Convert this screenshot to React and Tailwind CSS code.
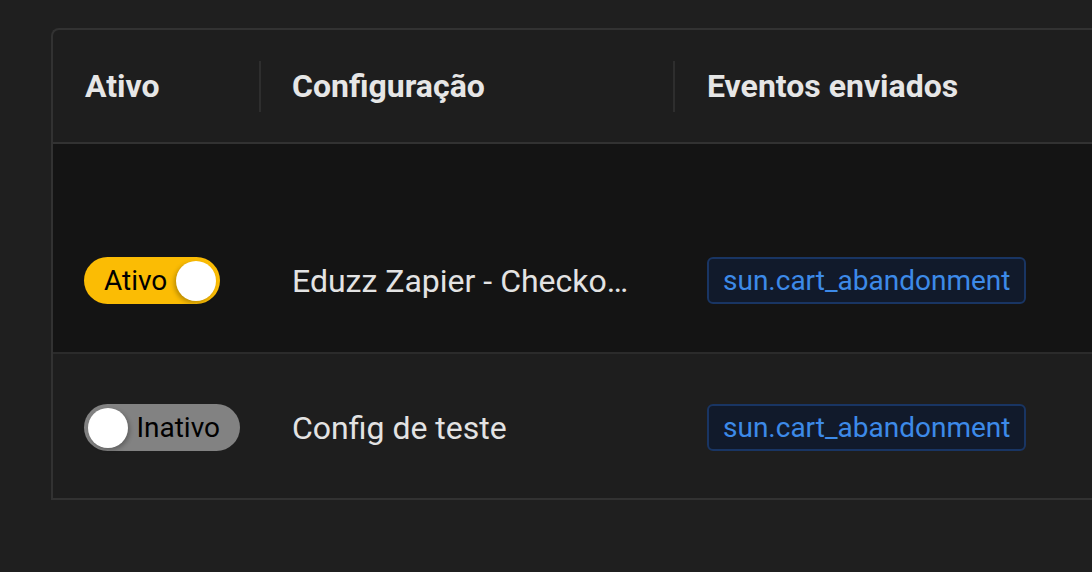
import React from "react";

const rows = [
  { active: true, name: "Eduzz Zapier - Checkout abandonado", event: "sun.cart_abandonment", pad: "pt-[113px] pb-[48px]", bg: "bg-[#141414]" },
  { active: false, name: "Config de teste", event: "sun.cart_abandonment", pad: "pt-[50px] pb-[47px]", bg: "bg-[#1e1e1e]" },
];

const Toggle = ({ on }) =>
  on ? (
    <div className="flex items-center h-[47px] w-[136px] rounded-full bg-[#fbbc04] pl-[20px] pr-[4px] justify-between">
      <span className="text-[28px] leading-none text-black">Ativo</span>
      <span className="h-[40px] w-[40px] rounded-full bg-white shadow-[-2px_2px_4px_rgba(0,0,0,0.25)]" />
    </div>
  ) : (
    <div className="flex items-center h-[47px] w-[156px] rounded-full bg-[#828282] pl-[4px] justify-between pr-[20px]">
      <span className="h-[40px] w-[40px] rounded-full bg-white shadow-[2px_2px_4px_rgba(0,0,0,0.25)]" />
      <span className="text-[28px] leading-none text-black">Inativo</span>
    </div>
  );

export default function App() {
  return (
    <div className="min-h-[572px] w-full bg-[#1f1f1f] pt-[28px] pl-[51px] overflow-hidden font-['Roboto',sans-serif]">
      <div className="w-[1100px] rounded-tl-[8px] border-2 border-r-0 border-[#323232] bg-[#1e1e1e]">
        <div className="flex items-center h-[114px] border-b-2 border-[#323232] text-[32px] font-bold text-[#e6e6e6]">
          <div className="w-[208px] px-[32px] border-r-2 border-[#2e2e2e] h-[51px] flex items-center">Ativo</div>
          <div className="w-[414px] px-[31px] border-r-2 border-[#2e2e2e] h-[51px] flex items-center">Configuração</div>
          <div className="px-[32px] h-[51px] flex items-center">Eventos enviados</div>
        </div>
        {rows.map((r, i) => (
          <div key={i} className={`flex items-center ${r.pad} ${r.bg} ${i === 0 ? "border-b-2 border-[#2b2b2b]" : ""}`}>
            <div className="w-[208px] pl-[31px]">
              <Toggle on={r.active} />
            </div>
            <div className="w-[414px] pl-[31px]">
              <div className="max-w-[340px] truncate text-[32px] leading-[40px] text-[#e3e3e3]">{r.name}</div>
            </div>
            <div className="pl-[32px]">
              <span className="inline-block rounded-[6px] border-2 border-[#193563] bg-[#111a2b] px-[14px] py-[5px] text-[28px] leading-[33px] text-[#3d8ae8]">
                {r.event}
              </span>
            </div>
          </div>
        ))}
      </div>
    </div>
  );
}
